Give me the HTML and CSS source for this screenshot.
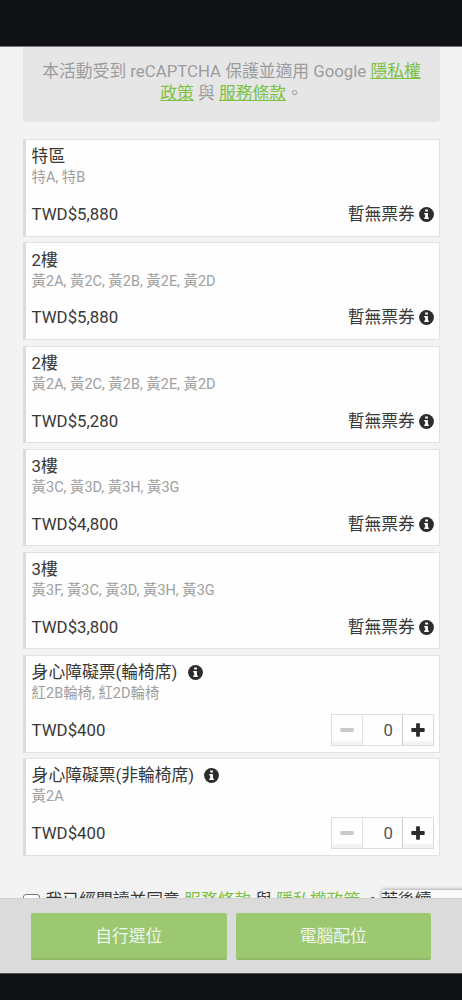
FILE: index.html
```html
<!DOCTYPE html>
<html lang="zh-Hant">
<head>
    <meta charset="UTF-8">
    <meta name="viewport" content="width=device-width, initial-scale=1.0">
    <title>選擇票券</title>
    <link rel="stylesheet" href="styles.css">
</head>
<body>
    <svg class="sprite" width="0" height="0">
        <symbol id="icon-info" viewBox="0 0 16 16">
            <circle cx="8" cy="8" r="7.9" fill="#2c2c2c"/>
            <path fill="#fff" d="M6.6 2.6h2.9v2.3H6.6zM5.6 6.3h3.9v5h1v1.6H5.6v-1.6h1V7.9h-1z"/>
        </symbol>
        <symbol id="icon-minus" viewBox="0 0 14 14">
            <rect x="0.3" y="5.1" width="13.4" height="3.8" rx="0.8" fill="#c9c9c9"/>
        </symbol>
        <symbol id="icon-plus" viewBox="0 0 14 14">
            <path fill="#2c2c2c" d="M5.9.3h2.2q.8 0 .8.8v4h4q.8 0 .8.8v2.2q0 .8-.8.8h-4v4q0 .8-.8.8H5.9q-.8 0-.8-.8v-4h-4q-.8 0-.8-.8V5.9q0-.8.8-.8h4v-4q0-.8.8-.8z"/>
        </symbol>
    </svg>

    <div class="status-bar"></div>

    <main class="content">
        <div class="notice">本活動受到 reCAPTCHA 保護並適用 Google <a href="#">隱私權政策</a> 與 <a href="#">服務條款</a>。</div>

        <div class="ticket-list">
            <div class="ticket">
                <div class="ticket-name">特區</div>
                <div class="ticket-seats">特A, 特B</div>
                <div class="ticket-row">
                    <span>TWD$5,880</span>
                    <span class="sold-out">暫無票券 <svg class="info"><use href="#icon-info"/></svg></span>
                </div>
            </div>
            <div class="ticket">
                <div class="ticket-name">2樓</div>
                <div class="ticket-seats">黃2A, 黃2C, 黃2B, 黃2E, 黃2D</div>
                <div class="ticket-row">
                    <span>TWD$5,880</span>
                    <span class="sold-out">暫無票券 <svg class="info"><use href="#icon-info"/></svg></span>
                </div>
            </div>
            <div class="ticket">
                <div class="ticket-name">2樓</div>
                <div class="ticket-seats">黃2A, 黃2C, 黃2B, 黃2E, 黃2D</div>
                <div class="ticket-row">
                    <span>TWD$5,280</span>
                    <span class="sold-out">暫無票券 <svg class="info"><use href="#icon-info"/></svg></span>
                </div>
            </div>
            <div class="ticket">
                <div class="ticket-name">3樓</div>
                <div class="ticket-seats">黃3C, 黃3D, 黃3H, 黃3G</div>
                <div class="ticket-row">
                    <span>TWD$4,800</span>
                    <span class="sold-out">暫無票券 <svg class="info"><use href="#icon-info"/></svg></span>
                </div>
            </div>
            <div class="ticket">
                <div class="ticket-name">3樓</div>
                <div class="ticket-seats">黃3F, 黃3C, 黃3D, 黃3H, 黃3G</div>
                <div class="ticket-row">
                    <span>TWD$3,800</span>
                    <span class="sold-out">暫無票券 <svg class="info"><use href="#icon-info"/></svg></span>
                </div>
            </div>
            <div class="ticket">
                <div class="ticket-name">身心障礙票(輪椅席) <svg class="info"><use href="#icon-info"/></svg></div>
                <div class="ticket-seats">紅2B輪椅, 紅2D輪椅</div>
                <div class="ticket-row">
                    <span>TWD$400</span>
                    <div class="stepper">
                        <button class="step minus" disabled><svg><use href="#icon-minus"/></svg></button>
                        <span class="quantity">0</span>
                        <button class="step plus"><svg><use href="#icon-plus"/></svg></button>
                    </div>
                </div>
            </div>
            <div class="ticket">
                <div class="ticket-name">身心障礙票(非輪椅席) <svg class="info"><use href="#icon-info"/></svg></div>
                <div class="ticket-seats">黃2A</div>
                <div class="ticket-row">
                    <span>TWD$400</span>
                    <div class="stepper">
                        <button class="step minus" disabled><svg><use href="#icon-minus"/></svg></button>
                        <span class="quantity">0</span>
                        <button class="step plus"><svg><use href="#icon-plus"/></svg></button>
                    </div>
                </div>
            </div>
        </div>

        <div class="captcha-badge"></div>
        <div class="agree">
            <span class="checkbox"></span>
            <span class="agree-text">我已經閱讀並同意 <a href="#">服務條款</a> 與 <a href="#">隱私權政策</a> 。若後續</span>
        </div>
    </main>

    <footer class="actions">
        <button class="action">自行選位</button>
        <button class="action">電腦配位</button>
    </footer>
    <div class="nav-bar"></div>
</body>
</html>
```
FILE: styles.css
```css
* { box-sizing: border-box; }
body { margin: 0; height: 1000px; display: flex; flex-direction: column; overflow: hidden; background: #f3f3f3; color: #383838; font-family: Roboto, "Noto Sans CJK TC", sans-serif; font-size: 16.8px; line-height: 23px; }
a { color: #7cc142; }
button { font: inherit; margin: 0; padding: 0; }
.sprite { position: absolute; }

.status-bar { flex: none; height: 47px; background: #111216; border-bottom: 1px solid #77787a; }
.nav-bar { flex: none; height: 27px; background: #111216; border-top: 1px solid #4d4f51; }

.content { position: relative; flex: 1; min-height: 0; overflow: hidden; padding: 0 22px 0 23px; }
.notice { height: 75px; margin-bottom: 17.3px; padding: 13px 18px 0; background: #e6e6e6; border-radius: 0 0 4px 4px; color: #9c9c9c; text-align: center; line-height: 22.4px; }

.ticket { height: 97.6px; margin-bottom: 5.55px; padding: 5.2px 5px 0 5.6px; background: #fefefe; border: 1px solid #e2e2e2; border-left: 3px solid #dcdcdc; }
.ticket-name { height: 22px; line-height: 23px; white-space: pre; }
.ticket-name .info { margin-left: 6px; }
.ticket-seats { height: 20px; font-size: 14.45px; line-height: 22px; color: #a0a0a0; }
.ticket-row { display: flex; justify-content: space-between; align-items: center; height: 32px; margin-top: 10.8px; }
.ticket-row > span { padding-top: 1px; }
.info { width: 15px; height: 15px; vertical-align: -2px; }

.stepper { display: flex; width: 103px; height: 32px; border: 1px solid #dedede; }
.step { display: flex; align-items: center; justify-content: center; width: 31px; border: 0; background: linear-gradient(#fefefe 85%, #f3f3f3 90%); }
.step svg { width: 14px; height: 14px; }
.minus { border-right: 1px solid #e2e2e2; }
.plus { border-left: 1px solid #ccc; }
.quantity { flex: 1; padding-right: 9px; text-align: right; line-height: 30px; color: #555; }

.captcha-badge { position: absolute; top: 843px; left: 382px; width: 100px; height: 60px; background: #f9f9f9; border-radius: 2px; box-shadow: 0 0 4px #888; }
.agree { position: relative; display: flex; gap: 5.6px; margin-top: 33px; white-space: nowrap; }
.agree a { text-decoration: none; }
.checkbox { flex: none; width: 17px; height: 17px; margin-top: 5px; border: 1.5px solid #777; border-radius: 3px; background: #fff; }

.actions { flex: none; display: flex; gap: 9px; height: 75px; padding: 14px 31px 0; background: #dbdbdb; border-top: 1px solid #d2d2d2; }
.action { flex: 1; height: 47px; padding-top: 2px; border: 0; border-bottom: 2px solid #90b968; border-radius: 2px; background: #9bc870; color: #f0f5ea; }
```
